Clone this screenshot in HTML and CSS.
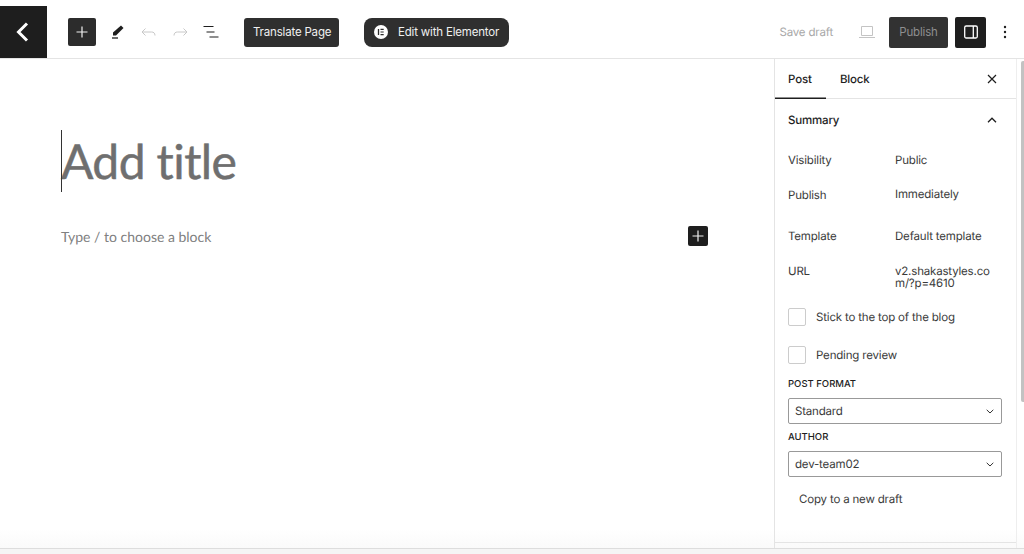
FILE: index.html
```html
<!DOCTYPE html>
<html lang="en">
<head>
    <meta charset="UTF-8">
    <meta name="viewport" content="width=device-width, initial-scale=1.0">
    <title>Add New Post</title>
    <link rel="stylesheet" href="styles.css">
</head>
<body>
    <header class="topbar">
        <a class="back-btn" href="#">
            <svg width="24" height="24" viewBox="0 0 24 24"><path d="M15 3.500 6.500 12l8.500 8.500" fill="none" stroke="#fff" stroke-width="3"/></svg>
        </a>
        <div class="tools">
            <button class="add-btn">
                <svg width="12" height="12" viewBox="0 0 12 12"><path d="M6 .5v11M.5 6h11" stroke="#f0f0f0" stroke-width="1.200"/></svg>
            </button>
            <svg class="tool-icon pen" width="20" height="20" viewBox="0 0 20 20"><path d="M5 10.500 13 3.500l2.500 2.500-7.500 7.500H5z" fill="#1e1e1e"/><path d="M4 16h6" stroke="#1e1e1e" stroke-width="1.300"/></svg>
            <svg class="tool-icon undo" width="20" height="20" viewBox="0 0 20 20"><path d="M6.500 6.500 3 10l3.500 3.500M3.500 10h9c2 0 3.500 1 3.500 3.500" fill="none" stroke="#c8c8c8" stroke-width="1"/></svg>
            <svg class="tool-icon redo" width="20" height="20" viewBox="0 0 20 20"><path d="M13.500 6.500 17 10l-3.500 3.500M16.500 10h-9C5.500 10 4 11 4 13.500" fill="none" stroke="#c8c8c8" stroke-width="1"/></svg>
            <svg class="tool-icon outline" width="20" height="20" viewBox="0 0 20 20"><path d="M2.500 4.500h10M5.500 10h8M8.500 15h9" stroke="#1e1e1e" stroke-width="1.200"/></svg>
            <button class="dark-btn translate-btn">Translate Page</button>
            <button class="dark-btn elementor-btn">
                <svg width="14" height="14" viewBox="0 0 14 14"><circle cx="7" cy="7" r="7" fill="#fff"/><path d="M4.500 4v6" stroke="#2c2c2c" stroke-width="1.300"/><path d="M6.500 4.300h3.200M6.500 7h3.200M6.500 9.700h3.200" stroke="#2c2c2c" stroke-width="1.200"/></svg>
                Edit with Elementor
            </button>
        </div>
        <div class="actions">
            <span class="save-draft">Save draft</span>
            <svg class="preview" width="18" height="14" viewBox="0 0 18 14"><path d="M3.500 1.500h11v9h-11zM1 12.500h16" fill="none" stroke="#c4c4c4" stroke-width="1"/></svg>
            <button class="publish-btn">Publish</button>
            <button class="panel-btn">
                <svg width="16" height="16" viewBox="0 0 16 16"><rect x="1.700" y="2" width="12.600" height="12" rx="1.500" fill="none" stroke="#fff" stroke-width="1.300"/><path d="M10.300 2v12" stroke="#fff" stroke-width="1.300"/></svg>
            </button>
            <svg class="more" width="4" height="14" viewBox="0 0 4 14"><circle cx="2" cy="2" r="1.200" fill="#1e1e1e"/><circle cx="2" cy="7" r="1.200" fill="#1e1e1e"/><circle cx="2" cy="12" r="1.200" fill="#1e1e1e"/></svg>
        </div>
    </header>

    <div class="workspace">
        <main class="editor">
            <h1 class="post-title"><span class="caret"></span>Add title</h1>
            <div class="block-row">
                <span class="block-hint">Type / to choose a block</span>
                <button class="block-add">
                    <svg width="12" height="12" viewBox="0 0 12 12"><path d="M6 .5v11M.5 6h11" stroke="#f0f0f0" stroke-width="1.200"/></svg>
                </button>
            </div>
        </main>

        <aside class="sidebar">
            <div class="tabs">
                <span class="tab active">Post</span>
                <span class="tab">Block</span>
                <svg class="close" width="10" height="10" viewBox="0 0 10 10"><path d="M1 1l8 8M9 1 1 9" stroke="#1e1e1e" stroke-width="1.200"/></svg>
            </div>
            <section class="summary">
                <div class="summary-head">
                    <span>Summary</span>
                    <svg width="10" height="6" viewBox="0 0 10 6"><path d="M1 5.200 5 1.200l4 4" fill="none" stroke="#1e1e1e" stroke-width="1.300"/></svg>
                </div>
                <div class="meta-row row-visibility"><span class="meta-label">Visibility</span><span>Public</span></div>
                <div class="meta-row row-publish"><span class="meta-label">Publish</span><span class="nudge-up">Immediately</span></div>
                <div class="meta-row row-template"><span class="meta-label">Template</span><span>Default template</span></div>
                <div class="meta-row row-url"><span class="meta-label">URL</span><span class="url">v2.shakastyles.com/?p=4610</span></div>
                <label class="check-row row-stick"><span class="checkbox"></span>Stick to the top of the blog</label>
                <label class="check-row row-pending"><span class="checkbox"></span>Pending review</label>
                <div class="field-label label-format">POST FORMAT</div>
                <div class="select-box"><span>Standard</span><svg width="8" height="5" viewBox="0 0 8 5"><path d="M.7.8 4 4l3.300-3.200" fill="none" stroke="#333" stroke-width="1"/></svg></div>
                <div class="field-label label-author">AUTHOR</div>
                <div class="select-box"><span>dev-team02</span><svg width="8" height="5" viewBox="0 0 8 5"><path d="M.7.8 4 4l3.300-3.200" fill="none" stroke="#333" stroke-width="1"/></svg></div>
                <div class="copy-draft">Copy to a new draft</div>
            </section>
        </aside>
        <div class="scrollbar"><div class="thumb"></div></div>
    </div>
    <footer class="statusbar"></footer>
</body>
</html>
```

FILE: styles.css
```css
* {
    box-sizing: border-box;
}

html, body {
    height: 100%;
}

body {
    margin: 0;
    display: flex;
    flex-direction: column;
    overflow: hidden;
    font-family: Inter, "Liberation Sans", sans-serif;
    font-size: 11.5px;
    letter-spacing: -.18px;
    text-rendering: geometricPrecision;
    color: #1e1e1e;
    background-color: #fff;
}

button {
    border: none;
    padding: 0;
    font: inherit;
    letter-spacing: inherit;
}

svg {
    display: block;
}

.topbar {
    height: 59px;
    flex: none;
    display: flex;
    align-items: center;
    padding-top: 6px;
    border-bottom: 1px solid #e4e4e4;
}

.back-btn {
    width: 47px;
    height: 52px;
    display: flex;
    align-items: center;
    justify-content: center;
    background-color: #1e1e1e;
}

.tools {
    display: flex;
    align-items: center;
    margin-left: 21px;
}

.add-btn {
    width: 28px;
    height: 28px;
    display: flex;
    align-items: center;
    justify-content: center;
    background-color: #2c2c2c;
    border-radius: 2px;
}

.pen {
    margin-left: 12px;
}

.undo {
    margin-left: 11px;
}

.redo {
    margin-left: 11px;
}

.outline {
    margin-left: 11px;
}

.dark-btn {
    height: 29px;
    display: flex;
    align-items: center;
    white-space: nowrap;
    color: #f0f0f0;
    background-color: #2f2f2f;
}

.translate-btn {
    width: 95px;
    margin-left: 23px;
    padding: 0 9px;
    border-radius: 3px;
}

.elementor-btn {
    margin-left: 25px;
    padding: 0 10px;
    gap: 10px;
    border-radius: 8px;
}

.actions {
    margin-left: auto;
    margin-right: 17px;
    display: flex;
    align-items: center;
}

.save-draft {
    color: #a8a8a8;
}

.preview {
    margin-left: 25px;
}

.publish-btn {
    width: 59px;
    height: 31px;
    margin-left: 13px;
    color: #8f8f8f;
    background-color: #323232;
    border-radius: 2px;
}

.panel-btn {
    width: 31px;
    height: 31px;
    margin-left: 7px;
    display: flex;
    align-items: center;
    justify-content: center;
    background-color: #1e1e1e;
    border-radius: 2px;
}

.more {
    margin-left: 17px;
}

.workspace {
    flex: 1;
    min-height: 0;
    display: flex;
    background: linear-gradient(#fff 96%, #fafafa);
}

.editor {
    flex: 1;
    padding: 71px 66px 0 61px;
}

.post-title {
    position: relative;
    height: 62px;
    margin: 0;
    padding-top: 1px;
    font-family: Lato, sans-serif;
    font-size: 48px;
    font-weight: 400;
    font-variant-ligatures: none;
    letter-spacing: -.6px;
    line-height: 62px;
    color: #6f6f6f;
    -webkit-text-stroke: .5px #6f6f6f;
}

.caret {
    position: absolute;
    left: 0;
    top: 0;
    width: 1px;
    height: 62px;
    background-color: #333;
}

.block-row {
    margin-top: 34px;
    display: flex;
    align-items: center;
    justify-content: space-between;
}

.block-hint {
    font-family: Lato, sans-serif;
    font-size: 14px;
    letter-spacing: 0;
    color: #808080;
}

.block-add {
    width: 20px;
    height: 20px;
    display: flex;
    align-items: center;
    justify-content: center;
    background-color: #1e1e1e;
    border-radius: 2px;
}

.sidebar {
    width: 242px;
    flex: none;
    border-left: 1px solid #e4e4e4;
}

.tabs {
    height: 40px;
    display: flex;
    align-items: center;
    border-bottom: 1px solid #e4e4e4;
    padding-right: 19px;
}

.tab {
    height: 40px;
    padding: 0 14px;
    display: flex;
    align-items: center;
    font-weight: 500;
}

.tab.active {
    width: 51px;
    padding-left: 13px;
    box-shadow: inset 0 -1.500px 0 #1e1e1e;
    margin-bottom: -1px;
}

.close {
    margin-left: auto;
}

.summary {
    height: 444px;
    padding: 0 13px;
    border-bottom: 1px solid #e4e4e4;
}

.summary-head {
    height: 41px;
    display: flex;
    align-items: center;
    justify-content: space-between;
    padding-right: 6px;
    font-weight: 500;
}

.meta-row {
    display: flex;
    line-height: 14px;
    color: #3a3a3a;
}

.meta-label {
    width: 107px;
    flex: none;
}

.row-visibility {
    margin-top: 13px;
}

.row-publish {
    margin-top: 21px;
}

.nudge-up {
    margin-top: -1px;
}

.row-template {
    margin-top: 27px;
}

.row-url {
    margin-top: 22px;
    line-height: 12px;
}

.url {
    width: 96px;
    word-break: break-all;
}

.check-row {
    display: flex;
    align-items: center;
    gap: 10px;
    color: #3a3a3a;
}

.row-stick {
    margin-top: 19px;
}

.row-pending {
    margin-top: 20px;
}

.checkbox {
    width: 18px;
    height: 18px;
    background-color: #fff;
    border: 1px solid #ccc;
    border-radius: 2px;
}

.field-label {
    font-size: 9.500px;
    font-weight: 500;
    letter-spacing: 0;
    line-height: 12px;
}

.label-format {
    margin-top: 15px;
    margin-bottom: 7px;
}

.label-author {
    margin-top: 8px;
    margin-bottom: 7px;
}

.select-box {
    width: 214px;
    height: 26px;
    display: flex;
    align-items: center;
    justify-content: space-between;
    padding: 0 7px 0 6px;
    border: 1px solid #999;
    border-radius: 2px;
    color: #3a3a3a;
}

.copy-draft {
    margin-top: 15px;
    padding-left: 11px;
    color: #3a3a3a;
}

.scrollbar {
    width: 8px;
    flex: none;
    padding: 2px 0 0 4px;
    border-left: 1px solid #eee;
}

.thumb {
    width: 4px;
    height: 341px;
    background-color: #c2c2c2;
    border-radius: 2px 0 0 2px;
}

.statusbar {
    height: 6px;
    flex: none;
    background-color: #f5f5f5;
    border-top: 1px solid #ddd;
}
```
